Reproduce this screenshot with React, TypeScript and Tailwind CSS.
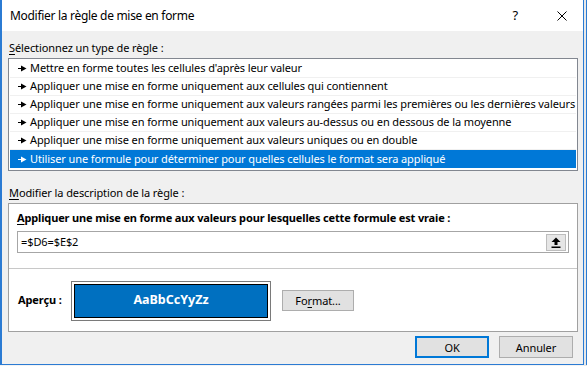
import React from "react";

const font = { fontFamily: '"Noto Sans", "Open Sans", sans-serif' };

const rules = [
  "Mettre en forme toutes les cellules d'après leur valeur",
  "Appliquer une mise en forme uniquement aux cellules qui contiennent",
  "Appliquer une mise en forme uniquement aux valeurs rangées parmi les premières ou les dernières valeurs",
  "Appliquer une mise en forme uniquement aux valeurs au-dessus ou en dessous de la moyenne",
  "Appliquer une mise en forme uniquement aux valeurs uniques ou en double",
  "Utiliser une formule pour déterminer pour quelles cellules le format sera appliqué",
];

const Bullet = ({ color }: { color: string }) => (
  <svg width="9" height="7" viewBox="0 0 9 7" className="shrink-0">
    <rect x="0" y="3" width="4" height="1" fill={color} />
    <polygon points="3,0.5 8.5,3.5 3,6.5" fill={color} />
  </svg>
);

const App = () => {
  return (
    <div className="w-[587px] h-[366px] flex bg-[#f3f3f3] text-[11px] tracking-[-0.1px] text-black" style={font}>
      <div className="w-[584px] h-[365px] flex flex-col bg-[#f0f0f0] border-l-2 border-r border-b border-[#2b7bd3]">
        {/* title bar */}
        <div className="h-[31px] shrink-0 flex items-center bg-white pl-[8px] pr-[16px]">
          <span className="text-[12px] tracking-[-0.3px] leading-none">Modifier la règle de mise en forme</span>
          <span className="ml-auto mr-[39px] text-[13px] leading-none">?</span>
          <svg width="10" height="10" viewBox="0 0 10 10">
            <path d="M0.5 0.5 L9.5 9.5 M9.5 0.5 L0.5 9.5" stroke="#000" strokeWidth="1" />
          </svg>
        </div>

        <div className="flex flex-col pl-[6px]">
          <div className="mt-[9px] h-[16px] leading-[16px] pl-[1px]">
            <span className="underline underline-offset-2">S</span>électionnez un type de règle :
          </div>

          <div className="mt-[2px] w-[570px] border border-[#828790] bg-white px-[1px] pt-[1px] pb-[2px]">
            {rules.map((r, i) => {
              const sel = i === rules.length - 1;
              return (
                <div
                  key={r}
                  className={
                    sel
                      ? "h-[18px] flex items-center gap-[3px] pl-[8px] bg-[#0078d7] text-white whitespace-nowrap"
                      : "h-[18px] flex items-center gap-[3px] pl-[8px] border-b border-[#f0f0f0] whitespace-nowrap"
                  }
                >
                  <Bullet color={sel ? "#fff" : "#000"} />
                  <span>{r}</span>
                </div>
              );
            })}
          </div>

          <div className="mt-[14px] h-[16px] leading-[16px] pl-[1px]">
            <span className="underline underline-offset-2">M</span>odifier la description de la règle :
          </div>

          <div className="mt-[2px] w-[570px] border border-[#a0a0a0] bg-white flex flex-col">
            <div className="h-[65px] px-[8px] pt-[6px] border-b border-[#c8c8c8]">
              <div className="h-[16px] leading-[16px] font-bold tracking-[-0.15px]">
                <span className="underline underline-offset-2">A</span>ppliquer une mise en forme aux valeurs pour lesquelles cette formule est vraie :
              </div>
              <div className="mt-[5px] w-[552px] h-[22px] border border-[#a6a6a6] flex items-center pl-[3px] pr-[2px]">
                <span>=$D6=$E$2</span>
                <div className="ml-auto w-[20px] h-[17px] bg-[#e6e6e6] border border-[#bdbdbd] flex items-center justify-center">
                  <svg width="10" height="11" viewBox="0 0 10 11">
                    <polygon points="5,0.5 9.5,5 0.5,5" fill="#000" />
                    <rect x="3.5" y="4.5" width="3" height="3.5" fill="#000" />
                    <rect x="0.5" y="9.5" width="9" height="1.5" fill="#000" />
                  </svg>
                </div>
              </div>
            </div>
            <div className="h-[62px] flex items-center pl-[9px] pt-[1px]">
              <span className="font-bold w-[53px]">Aperçu :</span>
              <div className="w-[200px] h-[40px] border border-[#7a7a7a] p-[2px]">
                <div className="w-full h-full border border-black bg-[#0070c0] flex items-center justify-center text-white font-bold text-[12.5px] tracking-normal">
                  AaBbCcYyZz
                </div>
              </div>
              <button className="ml-[11px] w-[72px] h-[21px] bg-[#e1e1e1] border border-[#adadad] flex items-center justify-center leading-none">
                Fo<span className="underline underline-offset-2">r</span>mat...
              </button>
            </div>
          </div>

          <div className="mt-[4px] flex justify-end gap-[10px] pr-[10px]">
            <button className="w-[74px] h-[22px] bg-[#e1e1e1] border-2 border-[#0078d7] leading-none">OK</button>
            <button className="w-[74px] h-[22px] bg-[#e1e1e1] border border-[#adadad] leading-none">Annuler</button>
          </div>
        </div>
      </div>
      <div className="flex-1 flex justify-end bg-[#e8e8e8]">
        <div className="w-[1px] h-[365px] bg-[#2b7bd3]" />
      </div>
    </div>
  );
};

export default App;
